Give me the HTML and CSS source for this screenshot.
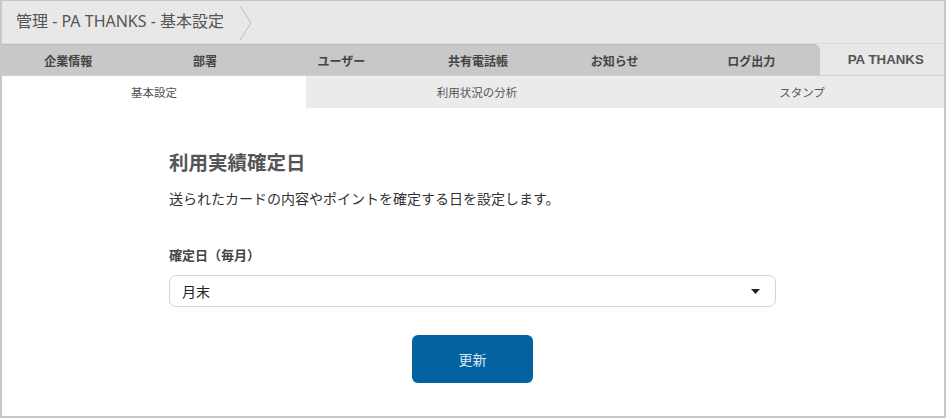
FILE: index.html
```html
<!DOCTYPE html>
<html lang="ja">
<head>
<meta charset="utf-8">
<link rel="stylesheet" href="styles.css">
</head>
<body>
<div class="frame">
  <header class="crumbbar">
    <span class="crumb">管理 - PA THANKS - 基本設定</span>
    <svg class="chev" width="14" height="36" viewBox="0 0 14 36"><polyline points="1,1 12,18 1,35" fill="none" stroke="#bdbdbd" stroke-width="1"/></svg>
  </header>
  <nav class="tabs">
    <div class="tab">企業情報</div>
    <div class="tab">部署</div>
    <div class="tab">ユーザー</div>
    <div class="tab">共有電話帳</div>
    <div class="tab">お知らせ</div>
    <div class="tab tab-last">ログ出力</div>
    <div class="tab active">PA THANKS</div>
  </nav>
  <nav class="subtabs">
    <div class="subtab sub-1 active">基本設定</div>
    <div class="subtab sub-2">利用状況の分析</div>
    <div class="subtab sub-3">スタンプ</div>
  </nav>
  <main class="content">
    <div class="form">
      <h1 class="title">利用実績確定日</h1>
      <p class="desc">送られたカードの内容やポイントを確定する日を設定します。</p>
      <label class="label">確定日（毎月）</label>
      <div class="select">
        <span>月末</span>
        <svg class="caret" width="9" height="5" viewBox="0 0 9 5"><polygon points="0,0 9,0 4.5,5" fill="#222"/></svg>
      </div>
      <div class="actions">
        <button class="btn">更新</button>
      </div>
    </div>
  </main>
</div>
</body>
</html>
```
FILE: styles.css
```css
* { box-sizing: border-box; }
html, body { margin: 0; padding: 0; background: #fff; }
body {
  font-family: "Noto Sans CJK JP", "Noto Sans", sans-serif;
  color: #333;
}
.frame {
  width: 946px;
  height: 418px;
  border-top: 1px solid #c4c4c4;
  border-left: 2px solid #c8c8c8;
  border-right: 2px solid #c8c8c8;
  border-bottom: 2px solid #c8c8c8;
  display: flex;
  flex-direction: column;
  overflow: hidden;
}
.crumbbar {
  height: 43px;
  flex: none;
  background: #e8e8e8;
  border-bottom: 1px solid #dcdcdc;
  display: flex;
  align-items: center;
  padding-left: 14px;
  gap: 15px;
}
.crumb {
  font-family: "Noto Sans", "Noto Sans CJK JP", sans-serif;
  font-size: 16px;
  color: #555;
  line-height: 1;
  margin-top: -2px;
}
.chev { display: block; margin-top: 2px; }
.tabs {
  height: 32px;
  flex: none;
  display: flex;
  background: #e8e8e8;
  border-bottom: 1px solid #cfcfcf;
  margin-left: -2px;
}
.tab {
  flex: none;
  width: 136.6px;
  display: flex;
  align-items: center;
  justify-content: center;
  background: #c8c8c8;
  border-top: 1px solid #bdbdbd;
  font-size: 12px;
  font-weight: 700;
  color: #444;
}
.tab-last { border-top-right-radius: 6px; }
.tab.active {
  flex: 1;
  width: auto;
  padding-left: 8px;
  background: #e8e8e8;
  border-top: none;
  font-family: "Liberation Sans", "Noto Sans CJK JP", sans-serif;
  font-size: 13.3px;
  color: #555;
}
.subtabs {
  height: 32px;
  flex: none;
  display: flex;
  background: #ebebeb;
}
.subtab {
  display: flex;
  align-items: center;
  justify-content: center;
  font-size: 11.5px;
  color: #555;
}
.sub-1 { width: 304px; }
.sub-2 { width: 342px; }
.sub-3 { flex: 1; padding-left: 12px; }
.subtab.active { background: #fff; }
.content {
  flex: 1;
  background: #fff;
  display: flex;
  justify-content: center;
  padding-right: 2px;
}
.form {
  width: 607px;
  margin-left: 1px;
  padding-top: 39px;
}
.title {
  margin: 0;
  font-size: 19.5px;
  font-weight: 700;
  color: #555;
  line-height: 30px;
}
.desc {
  margin: 11px 0 0;
  font-size: 14px;
  color: #333;
  line-height: 20px;
}
.label {
  display: block;
  margin-top: 37px;
  font-size: 13px;
  font-weight: 700;
  color: #444;
  line-height: 20px;
}
.select {
  margin-top: 10px;
  height: 32px;
  border: 1px solid #d6d6d6;
  border-radius: 7px;
  display: flex;
  align-items: center;
  justify-content: space-between;
  padding: 0 15px 0 12px;
  font-size: 14px;
  color: #222;
}
.caret { display: block; }
.actions {
  display: flex;
  justify-content: center;
  margin-top: 28px;
}
.btn {
  width: 121px;
  height: 48px;
  border: none;
  border-radius: 6px;
  background: #03629f;
  color: #dbe7f1;
  font-family: "Noto Sans CJK JP", sans-serif;
  font-size: 14px;
  margin-left: 0;
}
```
